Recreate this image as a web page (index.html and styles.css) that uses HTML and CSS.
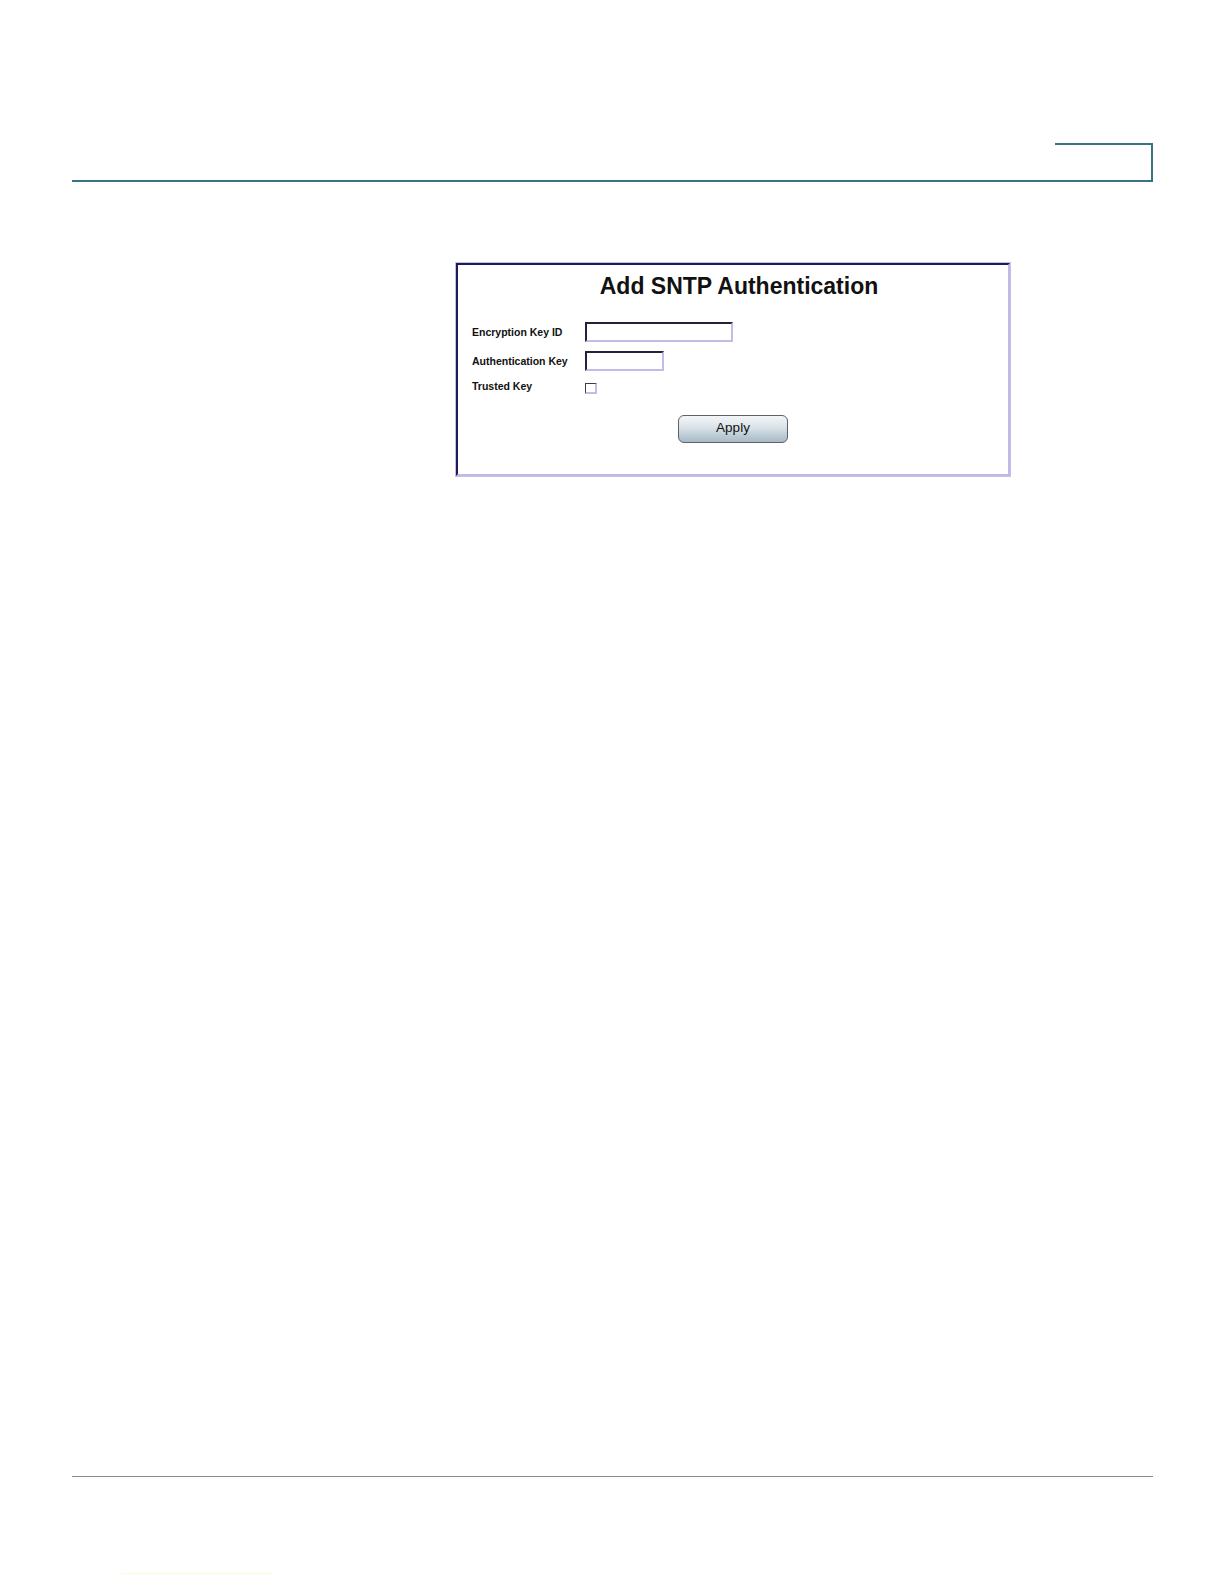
FILE: index.html
```html
<!DOCTYPE html>
<html lang="en">
<head>
<meta charset="utf-8">
<title>Add SNTP Authentication</title>
<link rel="stylesheet" href="styles.css">
</head>
<body>
<div class="page">
  <header class="header">
    <div class="tab"></div>
    <div class="rule"></div>
  </header>
  <main class="content">
    <section class="panel">
      <div class="panel-inner">
        <h1 class="title">Add SNTP Authentication</h1>
        <form class="form">
          <label class="label" for="keyid">Encryption Key ID</label>
          <input class="field field-long" id="keyid" type="text">
          <label class="label" for="authkey">Authentication Key</label>
          <input class="field field-short" id="authkey" type="text">
          <label class="label label-check" for="trusted">Trusted Key</label>
          <span class="check" id="trusted"></span>
        </form>
        <div class="actions">
          <button class="apply" type="button">Apply</button>
        </div>
      </div>
    </section>
  </main>
  <footer class="footer">
    <div class="footer-rule"></div>
    <div class="footer-mark"></div>
  </footer>
</div>
</body>
</html>
```

FILE: styles.css
```css
html, body {
  margin: 0;
  padding: 0;
  background: #ffffff;
}

body {
  font-family: "Liberation Sans", Arial, sans-serif;
  color: #000;
}

.page {
  width: 1224px;
  height: 1584px;
  display: flex;
  flex-direction: column;
}

.header {
  margin-left: 72px;
  width: 1081px;
  padding-top: 143px;
  display: flex;
  flex-direction: column;
  align-items: flex-end;
}

.tab {
  width: 96px;
  height: 35px;
  border-top: 2px solid #377383;
  border-right: 2px solid #377383;
}

.rule {
  width: 100%;
  height: 0;
  border-top: 2px solid #377383;
}

.content {
  height: 1294px;
  padding-left: 455px;
  padding-top: 80px;
  box-sizing: border-box;
}

.panel {
  width: 556px;
  height: 215px;
  box-sizing: border-box;
  border: 1px solid #c4c0e4;
}

.panel-inner {
  height: 100%;
  box-sizing: border-box;
  border-top: 2px solid #1c1c58;
  border-left: 2px solid #1c1c58;
  border-bottom: 2px solid #c2bae6;
  border-right: 2px solid #c2bae6;
  padding: 6px 0 0 14px;
}

.title {
  margin: 0 0 0 -2px;
  text-align: center;
  font-size: 23px;
  font-weight: bold;
  line-height: 30px;
  color: #111;
}

.form {
  margin-top: 21px;
  display: grid;
  grid-template-columns: 113px auto;
  row-gap: 9px;
  align-items: center;
  justify-items: start;
}

.label {
  font-size: 10.5px;
  font-weight: bold;
  color: #111;
  line-height: 12px;
}

.label-check {
  align-self: start;
  margin-top: 0;
}

.field {
  height: 20px;
  box-sizing: border-box;
  margin: 0;
  padding: 0;
  border-top: 2px solid #22223c;
  border-left: 2px solid #22223c;
  border-bottom: 2px solid #c4bce6;
  border-right: 2px solid #c4bce6;
  background: #fff;
  outline: none;
}

.field-long {
  width: 148px;
}

.field-short {
  width: 79px;
}

.check {
  width: 12px;
  height: 11px;
  box-sizing: border-box;
  border-top: 1px solid #3a3a4a;
  border-left: 1px solid #3a3a4a;
  border-bottom: 2px solid #c4bce6;
  border-right: 2px solid #c4bce6;
  background: #fff;
  margin-top: 3px;
}

.actions {
  margin-top: 21px;
  padding-left: 206px;
}

.apply {
  width: 110px;
  height: 28px;
  border: 1px solid #5c6268;
  border-radius: 6px;
  background: linear-gradient(#f3f6f8 0%, #dde5ea 40%, #bccbd5 75%, #a9bac6 100%);
  font-family: "Liberation Sans", Arial, sans-serif;
  font-size: 13.5px;
  color: #111;
  padding: 0 0 3px 0;
  margin: 0;
}

.footer {
  margin-left: 72px;
  width: 1081px;
}

.footer-rule {
  height: 0;
  border-top: 1px solid #8a8a8a;
}

.footer-mark {
  margin-top: 96px;
  margin-left: 49px;
  width: 151px;
  height: 1px;
  background: #fbfbd6;
}
```
